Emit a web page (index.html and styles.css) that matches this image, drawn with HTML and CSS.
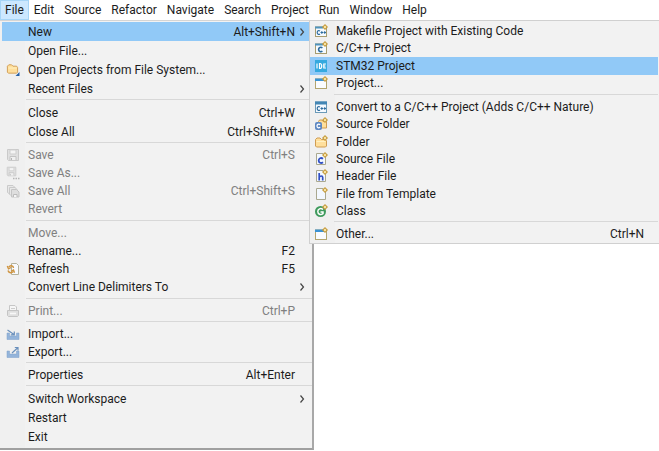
FILE: index.html
```html
<!DOCTYPE html>
<html lang="en">
<head>
<meta charset="utf-8">
<title>File menu</title>
<link rel="stylesheet" href="styles.css">
</head>
<body>
<svg class="defs" aria-hidden="true">
  <defs>
    <symbol id="spark" viewBox="0 0 6 6"><path d="M3 0L6 3L3 6L0 3Z" fill="#c59a3c"/><path d="M3 1.6L4.4 3L3 4.4L1.6 3Z" fill="#fff0b8"/></symbol>
    <symbol id="win" viewBox="0 0 14 14"><rect x="1.5" y="3" width="11" height="9.5" fill="#fafcff" stroke="#b3a56f"/><rect x="1" y="2.5" width="9" height="2.5" fill="#3c93d3"/><use href="#spark" x="8" y="0" width="6" height="6"/></symbol>
    <symbol id="cwin" viewBox="0 0 14 14"><rect x="1.5" y="3" width="11" height="9.5" fill="#f5faff" stroke="#a79d70"/><rect x="1" y="2.5" width="8" height="2" fill="#4f93bd"/><path d="M8.4 6.8C6.8 5.6 4.6 6.5 4.6 8.5S6.8 11.4 8.4 10.2" fill="none" stroke="#2d6c9e" stroke-width="1.6"/><use href="#spark" x="8" y="0" width="6" height="6"/></symbol>
    <symbol id="cppwin" viewBox="0 0 14 14"><rect x="1.5" y="3" width="11" height="9.5" fill="#f5faff" stroke="#a79d70"/><rect x="1" y="2.5" width="8" height="2" fill="#4f93bd"/><path d="M6 7C4.500 6 3.200 7 3.200 8.500S4.500 11 6 10M6.500 8.500H9M7.800 7.300V9.700M9.500 8.500H12M10.700 7.300V9.700" fill="none" stroke="#2d6c9e" stroke-width="1.2"/><use href="#spark" x="8" y="0" width="6" height="6"/></symbol>
    <symbol id="convert" viewBox="0 0 14 14"><rect x="1.5" y="2" width="11" height="10.5" fill="#f5faff" stroke="#6b9ab8"/><rect x="1" y="1.5" width="12" height="3" fill="#4386b4"/><path d="M6 7C4.500 6 3.200 7 3.200 8.500S4.500 11 6 10M6.500 8.500H9M7.800 7.300V9.700M9.500 8.500H12M10.700 7.300V9.700" fill="none" stroke="#2d6c9e" stroke-width="1.2"/></symbol>
    <symbol id="ide" viewBox="0 0 14 14"><rect x="1" y="1" width="12" height="12" fill="#35a9df"/><path d="M3 4.500V9.500M5.500 4.500V9.500H6C8.300 9.500 8.300 4.500 6 4.500ZM12 5H9.800V9H12M9.800 7H11.500" fill="none" stroke="#fff" stroke-width="1.2"/></symbol>
    <symbol id="folder" viewBox="0 0 14 14"><path d="M1.500 11V4.500L3 3H6L7.500 4.500H11.500L12.500 6V11L11.500 12H2.500Z" fill="#ffdf9c" stroke="#cf9c52"/><path d="M2.500 6.500H11.500" stroke="#fff1c4"/></symbol>
    <symbol id="newfolder" viewBox="0 0 14 14"><use href="#folder" width="14" height="14"/><use href="#spark" x="8" y="0" width="6" height="6"/></symbol>
    <symbol id="openfolder" viewBox="0 0 14 14"><use href="#folder" y="-1" width="13" height="13"/><path d="M13.500 9V13H9.500Z" fill="#255fa5"/></symbol>
    <symbol id="srcfolder" viewBox="0 0 14 14"><path d="M4.500 11V4.500L5.500 3H8L9 4.500H12.500V11Z" fill="#ffdf9c" stroke="#cf9c52"/><rect x="1" y="5" width="7" height="8" rx="2" fill="#5e88c2"/><path d="M6.200 7.700C4.500 6.500 3 7.500 3 9S4.500 11.500 6.200 10.300" fill="none" stroke="#fff" stroke-width="1.2"/><use href="#spark" x="8" y="0" width="6" height="6"/></symbol>
    <symbol id="page" viewBox="0 0 14 14"><path d="M2.500 1.500H9L11.500 4V12.500H2.500Z" fill="#f3f8ff" stroke="#aaa88f"/><use href="#spark" x="8" y="0" width="6" height="6"/></symbol>
    <symbol id="cfile" viewBox="0 0 14 14"><use href="#page" width="14" height="14"/><path d="M9 6.800C7 5.200 4.700 6.300 4.700 8.500S7 11.800 9 10.200" fill="none" stroke="#304fc4" stroke-width="1.8"/></symbol>
    <symbol id="hfile" viewBox="0 0 14 14"><use href="#page" width="14" height="14"/><path d="M5.200 4V11.500M5.200 8.500C6 6.500 8.700 6.500 8.700 8.500V11.500" fill="none" stroke="#304fc4" stroke-width="1.7"/></symbol>
    <symbol id="class" viewBox="0 0 14 14"><circle cx="6.5" cy="7.500" r="5.500" fill="#3e9a5c"/><path d="M9 5.500C6.500 3.500 3.800 5 3.800 7.500S6.500 11.500 9 9.700V8H6.500" fill="none" stroke="#fff" stroke-width="1.5"/><use href="#spark" x="8" y="0" width="6" height="6"/></symbol>
    <symbol id="save" viewBox="0 0 14 14"><path d="M1.500 1.500H12.500V12.500H2.500L1.500 11.500Z" fill="#e0e0e0" stroke="#cacaca"/><path d="M4 2H10V6H4Z" fill="#f4f4f4" stroke="#cfcfcf"/><path d="M4 12V8.500H10V12" fill="#f0f0f0" stroke="#c4c4c4"/><path d="M5.500 10V12" stroke="#b5b5b5"/></symbol>
    <symbol id="saveas" viewBox="0 0 14 14"><use href="#save" width="11" height="11"/><path d="M7 12.500H8.500M9.500 12.500H11M12 12.500H13.500" stroke="#b5b5b5" stroke-width="1.5"/></symbol>
    <symbol id="saveall" viewBox="0 0 14 14"><path d="M1.500 8.500V1.500H7L9 3.500V9.500H3Z" fill="#e8e8e8" stroke="#cacaca"/><path d="M3.500 10.500V3.500H9L11 5.500V11H4.500Z" fill="#e8e8e8" stroke="#cacaca"/><path d="M5.500 5.500H10.500L13 8V13H5.500Z" fill="#dedede" stroke="#c4c4c4"/><path d="M7.500 13V10.500H11V13" fill="#f5f5f5" stroke="#bbb"/></symbol>
    <symbol id="refresh" viewBox="0 0 14 14"><path d="M5.500 1.500H10.500L12.500 3.500V12.500H5.500Z" fill="#f7faff" stroke="#b5b29c"/><path d="M7.500 6C7.500 3.500 4 3 3 5M1.300 4L2.500 6.800L5 5.500M2 8.500C2.500 11 6 11.500 7 9.500M8.500 10.800L7.500 8L5 9.300" fill="none" stroke="#cf9440" stroke-width="1.4"/></symbol>
    <symbol id="print" viewBox="0 0 14 14"><path d="M3.500 7V1.500H9L10.500 3V7" fill="#f6f6f6" stroke="#c6c6c6"/><path d="M1.500 6.500H12.500V11.500L11.500 12.500H2.500L1.500 11.500Z" fill="#dfdfdf" stroke="#c4c4c4"/><path d="M4 9.500H10" stroke="#f8f8f8" stroke-width="1.5"/><path d="M5 4.500H9" stroke="#ccc"/></symbol>
    <symbol id="import" viewBox="0 0 14 14"><path d="M1 6H3.500V9H10.500V6H13V12.500H1Z" fill="#94b4da" stroke="#7ea1ca" stroke-width=".5"/><path d="M1.500 3L8 7.500M8.300 4.500V7.800H4.800" fill="none" stroke="#6a90bc" stroke-width="1.2"/></symbol>
    <symbol id="export" viewBox="0 0 14 14"><path d="M1 6H3.500V9H10.500V6H13V12.500H1Z" fill="#94b4da" stroke="#7ea1ca" stroke-width=".5"/><path d="M6 8L12 2.500M8.800 2.500H12V5.500" fill="none" stroke="#6a90bc" stroke-width="1.2"/></symbol>
    <symbol id="chevron" viewBox="0 0 6 10"><path d="M1.500 1.500L4.500 5L1.500 8.500" fill="none" stroke="#444" stroke-width="1.2"/></symbol>
  </defs>
</svg>

<nav class="menubar" aria-label="Main">
  <button class="active">File</button><button>Edit</button><button>Source</button><button>Refactor</button><button>Navigate</button><button>Search</button><button>Project</button><button>Run</button><button>Window</button><button>Help</button>
</nav>

<main class="popups">
  <section class="menu" aria-label="File">
    <div class="group roomy">
      <button class="item selected"><span class="label">New</span><span class="key">Alt+Shift+N</span><svg class="arrow"><use href="#chevron"/></svg></button>
      <button class="item"><span class="label">Open File...</span></button>
      <button class="item"><svg class="icon"><use href="#openfolder"/></svg><span class="label">Open Projects from File System...</span></button>
      <button class="item"><span class="label">Recent Files</span><svg class="arrow"><use href="#chevron"/></svg></button>
    </div>
    <hr>
    <div class="group roomy">
      <button class="item"><span class="label">Close</span><span class="key">Ctrl+W</span></button>
      <button class="item"><span class="label">Close All</span><span class="key">Ctrl+Shift+W</span></button>
    </div>
    <hr>
    <div class="group">
      <button class="item" disabled><svg class="icon"><use href="#save"/></svg><span class="label">Save</span><span class="key">Ctrl+S</span></button>
      <button class="item" disabled><svg class="icon"><use href="#saveas"/></svg><span class="label">Save As...</span></button>
      <button class="item" disabled><svg class="icon"><use href="#saveall"/></svg><span class="label">Save All</span><span class="key">Ctrl+Shift+S</span></button>
      <button class="item" disabled><span class="label">Revert</span></button>
    </div>
    <hr class="wide">
    <div class="group">
      <button class="item" disabled><span class="label">Move...</span></button>
      <button class="item"><span class="label">Rename...</span><span class="key">F2</span></button>
      <button class="item"><svg class="icon"><use href="#refresh"/></svg><span class="label">Refresh</span><span class="key">F5</span></button>
      <button class="item"><span class="label">Convert Line Delimiters To</span><svg class="arrow"><use href="#chevron"/></svg></button>
    </div>
    <hr class="wide">
    <div class="group">
      <button class="item" disabled><svg class="icon"><use href="#print"/></svg><span class="label">Print...</span><span class="key">Ctrl+P</span></button>
    </div>
    <hr>
    <div class="group">
      <button class="item"><svg class="icon"><use href="#import"/></svg><span class="label">Import...</span></button>
      <button class="item"><svg class="icon"><use href="#export"/></svg><span class="label">Export...</span></button>
    </div>
    <hr>
    <div class="group">
      <button class="item"><span class="label">Properties</span><span class="key">Alt+Enter</span></button>
    </div>
    <hr>
    <div class="group roomy">
      <button class="item"><span class="label">Switch Workspace</span><svg class="arrow"><use href="#chevron"/></svg></button>
      <button class="item"><span class="label">Restart</span></button>
      <button class="item"><span class="label">Exit</span></button>
    </div>
  </section>

  <section class="menu submenu" aria-label="New">
    <div class="group four">
      <button class="item"><svg class="icon"><use href="#cppwin"/></svg><span class="label">Makefile Project with Existing Code</span></button>
      <button class="item"><svg class="icon"><use href="#cwin"/></svg><span class="label">C/C++ Project</span></button>
      <button class="item selected"><svg class="icon"><use href="#ide"/></svg><span class="label">STM32 Project</span></button>
      <button class="item"><svg class="icon"><use href="#win"/></svg><span class="label">Project...</span></button>
    </div>
    <hr class="wide">
    <div class="group seven">
      <button class="item"><svg class="icon"><use href="#convert"/></svg><span class="label">Convert to a C/C++ Project (Adds C/C++ Nature)</span></button>
      <button class="item"><svg class="icon"><use href="#srcfolder"/></svg><span class="label">Source Folder</span></button>
      <button class="item"><svg class="icon"><use href="#newfolder"/></svg><span class="label">Folder</span></button>
      <button class="item"><svg class="icon"><use href="#cfile"/></svg><span class="label">Source File</span></button>
      <button class="item"><svg class="icon"><use href="#hfile"/></svg><span class="label">Header File</span></button>
      <button class="item"><svg class="icon"><use href="#page"/></svg><span class="label">File from Template</span></button>
      <button class="item"><svg class="icon"><use href="#class"/></svg><span class="label">Class</span></button>
    </div>
    <hr>
    <div class="group">
      <button class="item"><svg class="icon"><use href="#win"/></svg><span class="label">Other...</span><span class="key">Ctrl+N</span></button>
    </div>
  </section>
</main>
</body>
</html>
```
FILE: styles.css
```css
* { box-sizing: border-box; }

body {
  margin: 0;
  background: #fff;
  color: #1c1c1c;
  font: 12px/16px Roboto, "Open Sans", sans-serif;
}

button {
  margin: 0;
  border: 0;
  padding: 0;
  background: none;
  color: inherit;
  font: inherit;
  text-align: left;
  white-space: nowrap;
}

.defs { display: none; }

.menubar {
  display: flex;
  height: 20px;
}

.menubar button {
  padding: 2px 5px;
}

.menubar .active {
  background: #cce8ff;
  box-shadow: inset 0 0 0 1px #a6d5f7;
}

.popups {
  display: flex;
  align-items: flex-start;
}

.menu {
  flex: 0 0 314px;
  border-top: 1px solid #d5d5d5;
  border-right: 2px solid #a8a8a8;
  border-bottom: 2px solid #a0a0a0;
  padding: 1px 0 2px 2px;
  background: linear-gradient(90deg, #f0f0f0 25px, #f2f2f2 25px);
}

.submenu {
  flex: 1;
  min-width: 0;
  margin-left: -5px;
  border: 1px solid #d0d0d0;
  border-right: 0;
  padding: 1px 1px 0 0;
}

.group {
  display: flex;
  flex-direction: column;
}

.item {
  display: grid;
  grid-template-columns: 18px 1fr auto 10px;
  column-gap: 4px;
  align-items: center;
  height: 18px;
  margin-right: 3px;
  padding-left: 4px;
}

.roomy .item { height: 19px; }
.four { height: 70px; }
.seven { height: 122px; }

.four .item,
.seven .item {
  flex: 1;
  height: auto;
}

.submenu .item { margin-right: 0; }

.item:disabled { color: #808080; }
.selected { background: #91c9f7; }

.icon {
  grid-column: 1;
  grid-row: 1;
  width: 14px;
  height: 14px;
}

.label { grid-column: 2; grid-row: 1; }
.key { grid-column: 3; grid-row: 1; }

.arrow {
  grid-column: 4;
  grid-row: 1;
  width: 6px;
  height: 10px;
}

hr {
  height: 1px;
  margin: 1px 0 3px 24px;
  border: 0;
  background: #d8d8d8;
}

.wide { margin-top: 2px; }
```
